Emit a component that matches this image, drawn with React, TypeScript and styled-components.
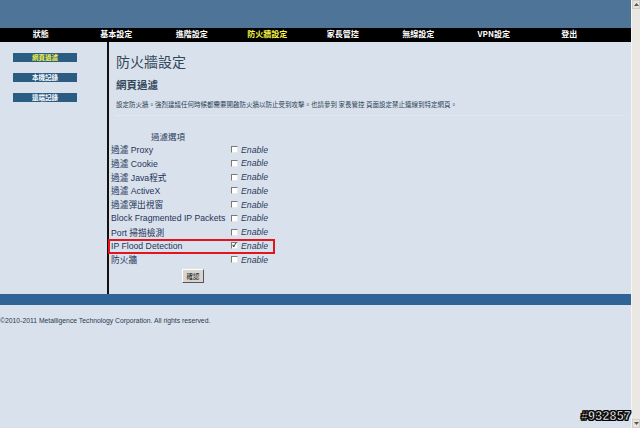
import React from "react";
import styled, { createGlobalStyle } from "styled-components";

const Global = createGlobalStyle`
  html, body { margin: 0; padding: 0; overflow: hidden; }
  body {
    width: 640px; height: 428px;
    background: #d9e2ec;
    font-family: "Liberation Sans", "Noto Sans CJK TC", sans-serif;
  }
`;

const Frame = styled.div`
  position: relative;
  display: flex;
  width: 640px;
  height: 428px;
`;

const Page = styled.div`
  width: 631px;
  display: flex;
  flex-direction: column;
  background: #d9e2ec;
`;

const Banner = styled.div`
  height: 28px;
  background: #4e7597;
`;

const Nav = styled.div`
  height: 14px;
  background: #000;
  display: grid;
  grid-template-columns: repeat(8, 75.5px);
  padding-left: 3px;
`;

const NavItem = styled.div<{ $active?: boolean }>`
  text-align: center;
  font-family: "Noto Sans CJK TC", sans-serif;
  font-weight: 700;
  font-size: 8px;
  line-height: 10px;
  padding-top: 1px;
  color: ${(p) => (p.$active ? "#f5f542" : "#ffffff")};
`;

const Body = styled.div`
  height: 252px;
  display: flex;
`;

const Sidebar = styled.div`
  width: 109px;
  border-right: 2px solid #111;
  display: flex;
  flex-direction: column;
  align-items: flex-start;
  gap: 11px;
  padding: 11px 0 0 13px;
  box-sizing: border-box;
`;

const SideButton = styled.div<{ $active?: boolean }>`
  width: 64px;
  height: 9px;
  background: #2b5c82;
  text-align: center;
  font-family: "Noto Sans CJK TC", sans-serif;
  font-weight: 700;
  font-size: 6.5px;
  line-height: 9px;
  color: ${(p) => (p.$active ? "#f5f542" : "#ffffff")};
`;

const Content = styled.div`
  flex: 1;
  padding: 10px 0 0 6px;
  display: flex;
  flex-direction: column;
`;

const Title = styled.h1`
  margin: 0 0 0 1px;
  font-family: "Noto Sans CJK TC", sans-serif;
  font-weight: 400;
  font-size: 14px;
  line-height: 18px;
  color: #34475a;
`;

const SubTitle = styled.h2`
  margin: 8px 0 0 1px;
  font-family: "Noto Sans CJK TC", sans-serif;
  font-weight: 700;
  font-size: 10.5px;
  line-height: 14px;
  color: #34475a;
`;

const Desc = styled.p`
  margin: 8px 0 0 1px;
  font-family: "Noto Sans CJK TC", sans-serif;
  font-size: 6.5px;
  line-height: 9px;
  color: #2d3f55;
  white-space: nowrap;
`;

const Rule = styled.div`
  margin-top: 6px;
  height: 1px;
  width: 510px;
  background: #e0e7ef;
`;

const OptionTable = styled.div`
  margin: 13px 0 0 -4px;
  display: grid;
  grid-template-columns: 120px 60px;
  grid-auto-rows: 13.75px;
  align-items: center;
`;

const TableHead = styled.div`
  grid-column: 1 / 2;
  text-align: center;
  padding-right: 6px;
  font-family: "Noto Sans CJK TC", sans-serif;
  font-size: 8.5px;
  color: #2b3d5c;
`;

const Row = styled.div<{ $marked?: boolean }>`
  grid-column: 1 / 3;
  display: grid;
  grid-template-columns: 120px 60px;
  align-items: center;
  height: 13.75px;
  position: relative;
  ${(p) =>
    p.$marked
      ? `&::after {
          content: "";
          position: absolute;
          left: -3px; top: 0px;
          width: 163px; height: 11px;
          border: 2px solid #e3141b;
          pointer-events: none;
        }`
      : ""}
`;

const Label = styled.span`
  font-size: 8.7px;
  color: #1e3358;
  white-space: nowrap;
`;

const CheckCell = styled.span`
  display: flex;
  align-items: center;
  gap: 3px;
`;

const Box = styled.span<{ $checked?: boolean }>`
  width: 5px;
  height: 5px;
  background: #fff;
  border-top: 1px solid #7a7a7a;
  border-left: 1px solid #7a7a7a;
  border-right: 1px solid #e8e8e8;
  border-bottom: 1px solid #e8e8e8;
  font-size: 6px;
  font-weight: 700;
  line-height: 5px;
  text-align: center;
  color: #000;
  overflow: hidden;
`;

const Enable = styled.span`
  font-style: italic;
  font-size: 8.7px;
  color: #2a3d5e;
`;

const ButtonRow = styled.div`
  grid-column: 1 / 3;
  padding: 4px 0 0 71px;
  height: 20px;
`;

const Confirm = styled.button`
  width: 22px;
  height: 14px;
  padding: 0;
  background: #d8d5ce;
  border-top: 1px solid #fff;
  border-left: 1px solid #fff;
  border-right: 1px solid #555;
  border-bottom: 1px solid #555;
  font-family: "Noto Sans CJK TC", sans-serif;
  font-size: 6.5px;
  line-height: 12px;
  color: #111;
`;

const FooterBar = styled.div`
  height: 11px;
  background: #2f6497;
`;

const Copyright = styled.div`
  padding-top: 11px;
  font-size: 6.8px;
  line-height: 10px;
  color: #2a3a50;
`;

const Scrollbar = styled.div`
  width: 9px;
  background: #ebe8e3;
  border-left: 1px solid #f6f4f1;
  box-sizing: border-box;
  display: flex;
  flex-direction: column;
  justify-content: space-between;
`;

const ScrollArrow = styled.div`
  height: 9px;
  background: #e6e3dd;
  border: 1px solid #d2cec7;
  box-sizing: border-box;
  display: flex;
  align-items: center;
  justify-content: center;
`;

const Watermark = styled.div`
  position: absolute;
  right: 9px;
  bottom: 5px;
  font-family: "Liberation Sans", sans-serif;
  font-weight: 700;
  font-size: 12.5px;
  color: #fff;
  -webkit-text-stroke: 0.6px #000;
  text-shadow: 1px 0 #000, -1px 0 #000, 0 1px #000, 0 -1px #000, 1px 1px #000, -1px -1px #000, 1px -1px #000, -1px 1px #000;
  letter-spacing: 0.2px;
`;

const navItems = ["狀態", "基本設定", "進階設定", "防火牆設定", "家長管控", "無線設定", "VPN設定", "登出"];

const options: { label: string; checked?: boolean; marked?: boolean }[] = [
  { label: "過濾 Proxy" },
  { label: "過濾 Cookie" },
  { label: "過濾 Java程式" },
  { label: "過濾 ActiveX" },
  { label: "過濾彈出視窗" },
  { label: "Block Fragmented IP Packets" },
  { label: "Port 掃描檢測" },
  { label: "IP Flood Detection", checked: true, marked: true },
  { label: "防火牆" },
];

const Tri = ({ up }: { up?: boolean }) => (
  <svg width="5" height="3" viewBox="0 0 5 3">
    <path d={up ? "M0 3 L2.5 0 L5 3 Z" : "M0 0 L2.5 3 L5 0 Z"} fill="#555" />
  </svg>
);

export default function App() {
  return (
    <Frame>
      <Global />
      <Page>
        <Banner />
        <Nav>
          {navItems.map((n) => (
            <NavItem key={n} $active={n === "防火牆設定"}>
              {n}
            </NavItem>
          ))}
        </Nav>
        <Body>
          <Sidebar>
            <SideButton $active>網頁過濾</SideButton>
            <SideButton>本機記錄</SideButton>
            <SideButton>遠端記錄</SideButton>
          </Sidebar>
          <Content>
            <Title>防火牆設定</Title>
            <SubTitle>網頁過濾</SubTitle>
            <Desc>
              設定防火牆。強烈建議任何時候都需要開啟防火牆以防止受到攻擊。也請參到 家長管控 頁面設定禁止連線到特定網頁。
            </Desc>
            <Rule />
            <OptionTable>
              <TableHead>過濾選項</TableHead>
              {options.map((o) => (
                <Row key={o.label} $marked={o.marked}>
                  <Label>{o.label}</Label>
                  <CheckCell>
                    <Box $checked={o.checked}>{o.checked ? "✓" : ""}</Box>
                    <Enable>Enable</Enable>
                  </CheckCell>
                </Row>
              ))}
              <ButtonRow>
                <Confirm>確認</Confirm>
              </ButtonRow>
            </OptionTable>
          </Content>
        </Body>
        <FooterBar />
        <Copyright>©2010-2011 Metalligence Technology Corporation. All rights reserved.</Copyright>
      </Page>
      <Scrollbar>
        <ScrollArrow>
          <Tri up />
        </ScrollArrow>
        <ScrollArrow>
          <Tri />
        </ScrollArrow>
      </Scrollbar>
      <Watermark>#932857</Watermark>
    </Frame>
  );
}
